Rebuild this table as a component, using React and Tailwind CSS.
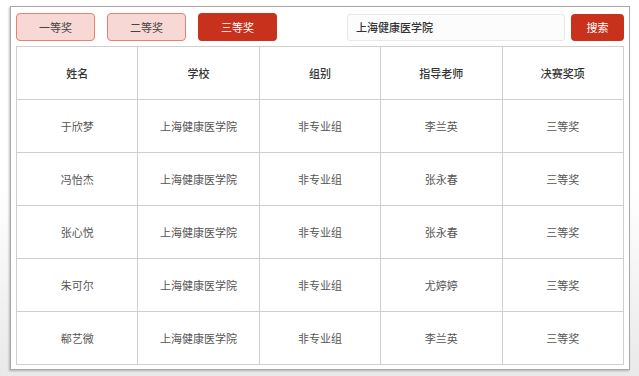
const rows = [
  ['于欣梦', '上海健康医学院', '非专业组', '李兰英', '三等奖'],
  ['冯怡杰', '上海健康医学院', '非专业组', '张永春', '三等奖'],
  ['张心悦', '上海健康医学院', '非专业组', '张永春', '三等奖'],
  ['朱可尔', '上海健康医学院', '非专业组', '尤婷婷', '三等奖'],
  ['郗艺微', '上海健康医学院', '非专业组', '李兰英', '三等奖'],
]

const heads = ['姓名', '学校', '组别', '指导老师', '决赛奖项']

export default function App() {
  return (
    <div
      className="w-[639px] h-[376px] bg-gradient-to-b from-white via-white to-[#e9e9e9] pt-[6px] pl-[10px]"
      style={{ fontFamily: '"Noto Sans CJK SC", "Noto Sans", sans-serif' }}
    >
      <div className="w-[620px] h-[364px] bg-white border border-[#a9a9a9] shadow-[-1px_1px_2px_rgba(0,0,0,0.25)] pt-[6px] pl-[5px] pr-[5px]">
        {/* Toolbar */}
        <div className="flex items-center justify-between h-[28px]">
          <div className="flex gap-[12px]">
            <button className="w-[79px] h-[28px] rounded-[4px] bg-[#f8d8d4] border border-[#e68272] text-[11px] text-[#444]">一等奖</button>
            <button className="w-[79px] h-[28px] rounded-[4px] bg-[#f8d8d4] border border-[#e68272] text-[11px] text-[#444]">二等奖</button>
            <button className="w-[79px] h-[28px] rounded-[4px] bg-[#c8311c] text-[11px] text-white">三等奖</button>
          </div>
          <div className="flex gap-[6px] items-center">
            <div className="w-[218px] h-[27px] rounded-[3px] border border-[#e8e8e8] bg-[#fcfcfc] flex items-center pl-[8px] text-[11px] font-medium text-[#333]">
              上海健康医学院
            </div>
            <button className="w-[53px] h-[27px] rounded-[4px] bg-[#c8311c] text-[11px] text-white">搜索</button>
          </div>
        </div>

        {/* Table */}
        <table className="mt-[5px] w-[608px] border-collapse table-fixed text-[11px]">
          <thead>
            <tr className="h-[53px]">
              {heads.map(h => (
                <th key={h} className="border border-[#cfcfcf] font-medium text-[#333] text-center">{h}</th>
              ))}
            </tr>
          </thead>
          <tbody>
            {rows.map(r => (
              <tr key={r[0]} className="h-[53px]">
                {r.map((c, i) => (
                  <td key={i} className="border border-[#cfcfcf] text-[#555] text-center">{c}</td>
                ))}
              </tr>
            ))}
          </tbody>
        </table>
      </div>
    </div>
  )
}
